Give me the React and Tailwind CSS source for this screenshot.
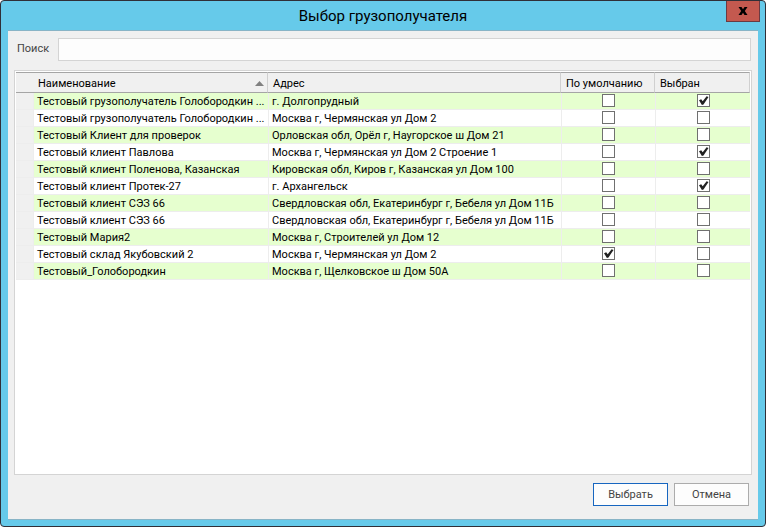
import { useState } from "react";

const initialRows = [
    { name: "Тестовый грузополучатель Голобородкин ...", address: "г. Долгопрудный", isDefault: false, selected: true },
    { name: "Тестовый грузополучатель Голобородкин ...", address: "Москва г, Чермянская ул Дом 2", isDefault: false, selected: false },
    { name: "Тестовый Клиент для проверок", address: "Орловская обл, Орёл г, Наугорское ш Дом 21", isDefault: false, selected: false },
    { name: "Тестовый клиент Павлова", address: "Москва г, Чермянская ул Дом 2 Строение 1", isDefault: false, selected: true },
    { name: "Тестовый клиент Поленова, Казанская", address: "Кировская обл, Киров г, Казанская ул Дом 100", isDefault: false, selected: false },
    { name: "Тестовый клиент Протек-27", address: "г. Архангельск", isDefault: false, selected: true },
    { name: "Тестовый клиент СЭЗ 66", address: "Свердловская обл, Екатеринбург г, Бебеля ул Дом 11Б", isDefault: false, selected: false },
    { name: "Тестовый клиент СЭЗ 66", address: "Свердловская обл, Екатеринбург г, Бебеля ул Дом 11Б", isDefault: false, selected: false },
    { name: "Тестовый Мария2", address: "Москва г, Строителей ул Дом 12", isDefault: false, selected: false },
    { name: "Тестовый склад Якубовский 2", address: "Москва г, Чермянская ул Дом 2", isDefault: true, selected: false },
    { name: "Тестовый_Голобородкин", address: "Москва г, Щелковское ш Дом 50А", isDefault: false, selected: false },
];

function CheckBox({ label, checked, onChange }) {
    return (
        <span className="mx-auto mt-px grid size-[13px]">
            <input
                type="checkbox"
                aria-label={label}
                checked={checked}
                onChange={onChange}
                className="col-start-1 row-start-1 size-[13px] appearance-none border border-[#707070] bg-white"
            />
            {checked && (
                <svg viewBox="0 0 13 13" className="pointer-events-none col-start-1 row-start-1 size-[13px]">
                    <path d="M2 6.2 L4.2 5.2 L5.7 7.2 L9.6 2.2 L11.5 3 L6.5 10.4 L4.9 10.9 Z" fill="#212121" />
                </svg>
            )}
        </span>
    );
}

function TitleBar() {
    return (
        <header className="grid h-[29px] shrink-0 grid-cols-[1fr_auto_1fr] items-start">
            <h1 className="col-start-2 text-[15px] leading-[30px] text-black">Выбор грузополучателя</h1>
            <button
                type="button"
                aria-label="Закрыть"
                className="mr-[-2px] flex h-[21px] w-[34px] items-center justify-center justify-self-end border border-t-0 border-[#6b3a42] bg-[#c4594f]"
            >
                <svg viewBox="0 0 10 8" className="h-2 w-[10px]">
                    <path d="M0.5 0 H3.5 L5 2.2 L6.5 0 H9.5 L6.8 4 L9.5 8 H6.5 L5 5.8 L3.5 8 H0.5 L3.2 4 Z" fill="#000" />
                </svg>
            </button>
        </header>
    );
}

function App() {
    const [rows, setRows] = useState(initialRows);
    const [query, setQuery] = useState("");

    const toggle = (index, field) => {
        setRows(rows.map((row, i) => (i === index ? { ...row, [field]: !row[field] } : row)));
    };

    const visible = rows
        .map((row, index) => ({ ...row, index }))
        .filter((row) => row.name.toLowerCase().includes(query.toLowerCase()));

    return (
        <div className="flex min-h-screen flex-col rounded-[4px] border border-[#302f37] bg-[#66caea] px-[7px] pb-[6px] font-['Roboto',sans-serif] text-[11px]">
            <TitleBar />
            <main className="flex flex-1 flex-col border-y border-[#88b4c6] bg-[#f0f0f0] px-[6px] pt-[7px] pb-[13px]">
                <div className="flex items-center pr-px">
                    <label htmlFor="search" className="w-[44px] pb-px pl-[3px] text-[#444]">Поиск</label>
                    <input
                        id="search"
                        type="text"
                        value={query}
                        onChange={(e) => setQuery(e.target.value)}
                        className="h-[23px] min-w-0 flex-1 border border-[#d4d4d4] bg-[#fdfdfd] px-1 outline-none"
                    />
                </div>

                <div className="mt-[9px] flex-1 border border-[#d4d4d4] bg-white px-px pt-px">
                    <table className="w-full table-fixed border-separate border-spacing-0 text-left text-black">
                        <colgroup>
                            <col className="w-[18px]" />
                            <col className="w-[234px]" />
                            <col />
                            <col className="w-[94px]" />
                            <col className="w-[95px]" />
                        </colgroup>
                        <thead>
                            <tr className="h-[21px] bg-[#f0f0f0] leading-[17px] *:border-y *:border-y-[#a5a5a5] *:p-0 *:pt-[2px] *:font-normal">
                                <th />
                                <th className="border-r border-r-[#d0d0d0]" aria-sort="ascending">
                                    <span className="flex items-center justify-between pr-[3px] pl-1">
                                        Наименование
                                        <svg viewBox="0 0 9 5" className="h-[5px] w-[9px]">
                                            <path d="M4.5 0 L9 5 H0 Z" fill="#808080" />
                                        </svg>
                                    </span>
                                </th>
                                <th className="border-r border-r-[#d0d0d0]"><span className="block pl-[5px]">Адрес</span></th>
                                <th className="border-r border-r-[#d0d0d0]"><span className="block pl-[5px]">По умолчанию</span></th>
                                <th className="border-r border-r-[#d0d0d0]"><span className="block pl-[5px]">Выбран</span></th>
                            </tr>
                        </thead>
                        <tbody>
                            {visible.map((row) => (
                                <tr
                                    key={row.index}
                                    className="h-[17px] bg-white leading-[14px] odd:bg-[#e6ffcf] *:border-b *:border-[#ededed] *:p-0 *:align-top"
                                >
                                    <td className="border-r bg-[#f0f0f0]" />
                                    <td className="truncate pt-[2px]! pl-[3px]!">{row.name}</td>
                                    <td className="truncate border-l pt-[2px]! pl-[3px]!">{row.address}</td>
                                    <td className="border-l">
                                        <CheckBox
                                            label="По умолчанию"
                                            checked={row.isDefault}
                                            onChange={() => toggle(row.index, "isDefault")}
                                        />
                                    </td>
                                    <td className="border-l">
                                        <CheckBox
                                            label="Выбран"
                                            checked={row.selected}
                                            onChange={() => toggle(row.index, "selected")}
                                        />
                                    </td>
                                </tr>
                            ))}
                        </tbody>
                    </table>
                </div>

                <div className="mt-2 flex justify-end gap-[6px] pr-[3px] text-[#444]">
                    <button type="button" className="h-[23px] w-[75px] border border-[#1766c0] bg-[#fdfdfd] pt-[2px]">Выбрать</button>
                    <button type="button" className="h-[23px] w-[75px] border border-[#acacac] bg-[#fdfdfd] pt-[2px]">Отмена</button>
                </div>
            </main>
        </div>
    );
}

export default App;
